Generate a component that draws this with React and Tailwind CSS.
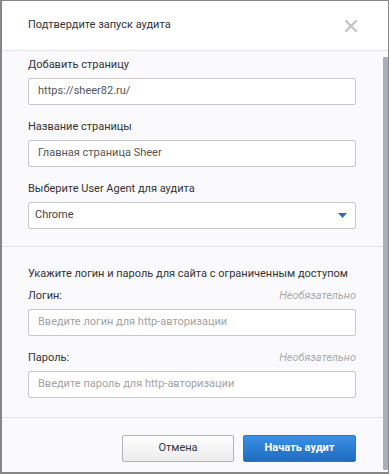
import React from "react";

function Field({ label, value, placeholder, optional }) {
  return (
    <div className="flex flex-col">
      <div className="flex h-[16px] items-center justify-between leading-[16px]">
        <span className="text-[11px] text-[#333]">{label}</span>
        {optional && (
          <span className="text-[11px] italic text-[#a9a9a9]">Необязательно</span>
        )}
      </div>
      <div className="mt-[5px] box-border flex h-[27px] items-center rounded-[2px] border border-[#c8c8c8] bg-white px-[9px]">
        {value ? (
          <span className="text-[11px] text-[#555]">{value}</span>
        ) : (
          <span className="text-[11px] text-[#a3a3a3]">{placeholder}</span>
        )}
      </div>
    </div>
  );
}

export default function App() {
  return (
    <div
      className="box-border flex h-[474px] w-[389px] bg-[#868686] pb-[2px] pl-[2px] pr-[1px] pt-[1px]"
      style={{ fontFamily: "Roboto, 'Noto Sans', sans-serif" }}
    >
      <div className="relative flex flex-1 flex-col bg-[#fafafd]">
        {/* header */}
        <div className="box-border flex h-[50px] items-center justify-between border-b border-[#e5e5e8] bg-white pl-[26px] pr-[32px]">
          <span className="text-[11px] text-[#333]">Подтвердите запуск аудита</span>
          <svg width="12" height="12" viewBox="0 0 12 12" className="mr-[-1px]">
            <path d="M1 1 L11 11 M11 1 L1 11" stroke="#c6c6c6" strokeWidth="2.4" strokeLinecap="square" />
          </svg>
        </div>

        {/* section 1 */}
        <div className="box-border flex h-[196px] flex-col gap-[14px] border-b border-[#e2e2e6] pl-[26px] pr-[32px] pt-[6px]">
          <Field label="Добавить страницу" value="https://sheer82.ru/" />
          <Field label="Название страницы" value="Главная страница Sheer" />
          <div className="flex flex-col">
            <div className="flex h-[16px] items-center leading-[16px]">
              <span className="text-[11px] text-[#333]">Выберите User Agent для аудита</span>
            </div>
            <div className="mt-[5px] box-border flex h-[27px] items-center justify-between rounded-[2px] border border-[#c8c8c8] bg-white pl-[6px] pr-[8px]">
              <span className="text-[11px] text-[#444]">Chrome</span>
              <svg width="9" height="5" viewBox="0 0 9 5">
                <path d="M0 0 L9 0 L4.5 5 Z" fill="#2b6cbf" />
              </svg>
            </div>
          </div>
        </div>

        {/* section 2 */}
        <div className="box-border flex h-[171px] flex-col border-b border-[#e2e2e6] pl-[26px] pr-[32px] pt-[19px]">
          <div className="flex h-[16px] items-center leading-[16px]">
            <span className="text-[11px] text-[#333]">
              Укажите логин и пароль для сайта с ограниченным доступом
            </span>
          </div>
          <div className="mt-[6px] flex flex-col gap-[14px]">
            <Field label="Логин:" placeholder="Введите логин для http-авторизации" optional />
            <Field label="Пароль:" placeholder="Введите пароль для http-авторизации" optional />
          </div>
        </div>

        {/* footer */}
        <div className="flex flex-1 items-start justify-end gap-[9px] pr-[32px] pt-[17px]">
          <button className="box-border flex h-[27px] w-[112px] items-center justify-center rounded-[2px] border border-[#b3b3b3] bg-gradient-to-b from-[#ffffff] to-[#ececec] text-[11px] text-[#333]">
            Отмена
          </button>
          <button className="box-border flex h-[27px] w-[113px] items-center justify-center rounded-[2px] border border-[#2a78cc] bg-gradient-to-b from-[#3b90e2] to-[#1d6cc3] text-[11px] font-bold text-white">
            Начать аудит
          </button>
        </div>

        {/* scrollbar thumb */}
        <div className="absolute bottom-[2px] right-0 top-[56px] w-[5px] rounded-[1px] bg-[#a9afc1]" />
      </div>
    </div>
  );
}
